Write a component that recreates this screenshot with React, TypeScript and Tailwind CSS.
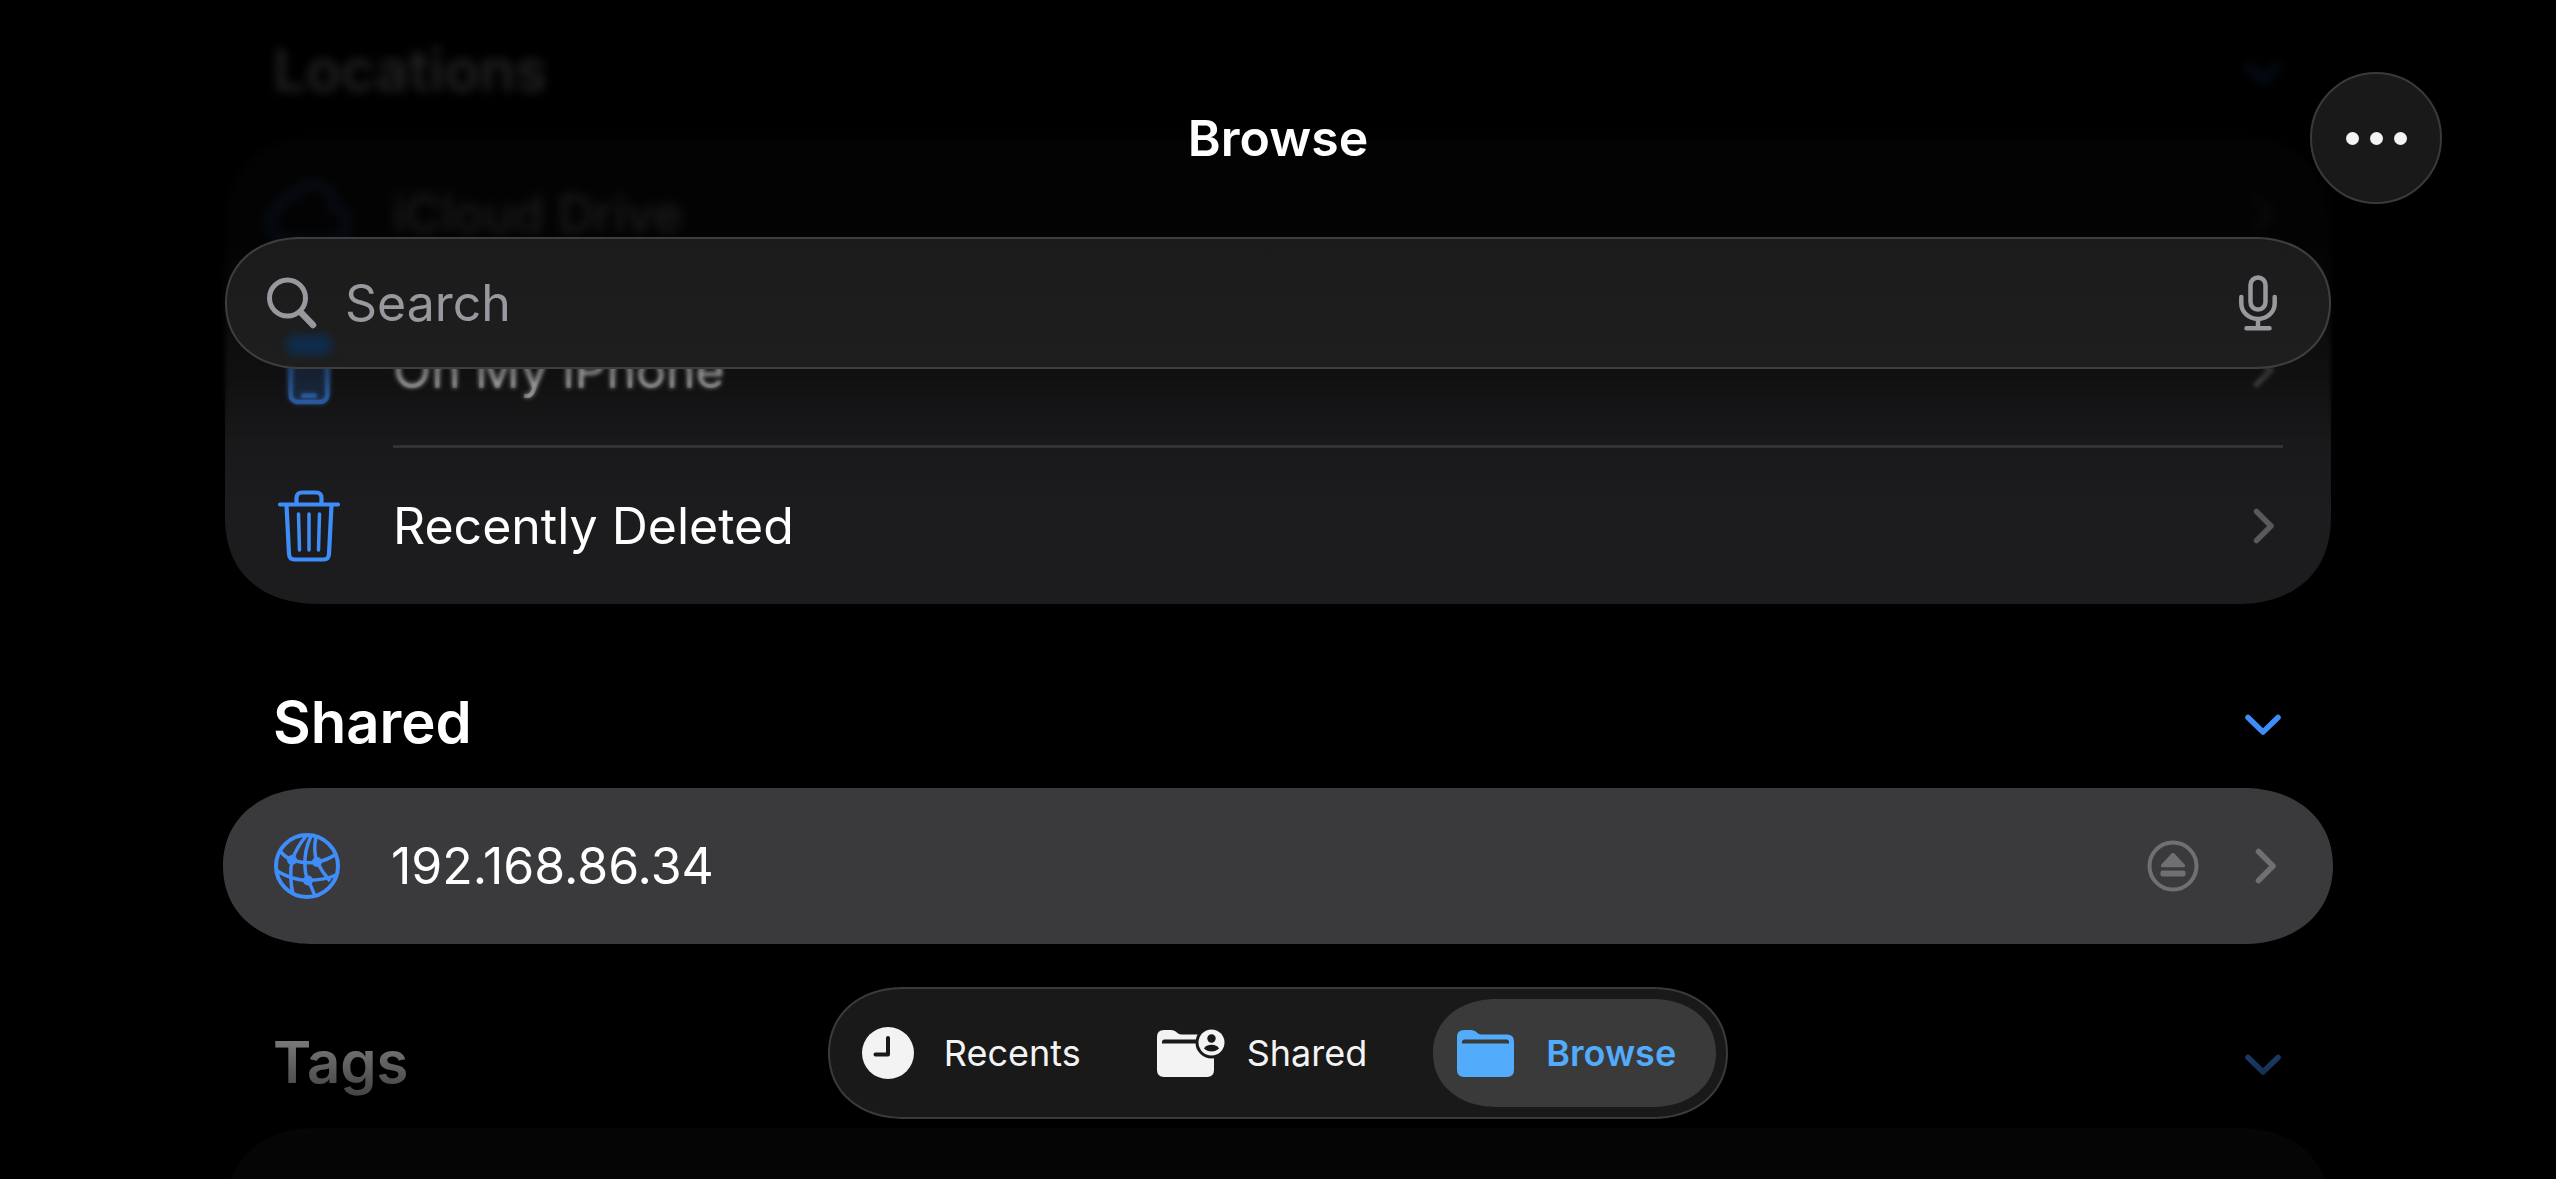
import { useState, type ReactNode } from "react";

type Tab = "Recents" | "Shared" | "Browse";

function TrashIcon() {
  return (
    <svg className="h-[72px] w-16" viewBox="0 0 64 72" fill="none" stroke="currentColor" strokeWidth="4.2" strokeLinecap="round" strokeLinejoin="round">
      <path d="M3 14.5H61M19.500 14V8q0-5.500 5.500-5.500H39Q44.500 2.500 44.500 8V14" />
      <path d="M9.500 15l2.500 49q.3 5.500 5.500 5.500H46.500q5.200 0 5.500-5.500L54.500 15" />
      <path d="M21.500 24l1 36M32 24v36M42.500 24l-1 36" strokeWidth="3.500" />
    </svg>
  );
}

function PhoneIcon() {
  return (
    <svg className="h-[72px] w-16" viewBox="0 0 64 72" fill="none" stroke="currentColor" strokeWidth="4.5" strokeLinecap="round">
      <rect x="13.500" y="2" width="37" height="66" rx="7" fill="currentColor" fillOpacity="0.25" />
      <path d="M26 61.500H38" />
    </svg>
  );
}

function CloudIcon() {
  return (
    <svg className="h-[72px] w-[84px]" viewBox="0 0 84 72" fill="none" stroke="currentColor" strokeWidth="5">
      <path d="M22 62C10 62 3 54 3 45c0-8 5-13 10-16 1-9 9-13 15-11C32 10 40 5 49 7c11 2 18 11 17 22 9 2 15 8 15 17 0 9-7 16-16 16Z" />
    </svg>
  );
}

function NetworkIcon() {
  return (
    <svg className="size-[66px]" viewBox="0 0 66 66" fill="none" stroke="currentColor" strokeWidth="3.5">
      <circle cx="33" cy="33" r="31" strokeWidth="4" />
      <path d="M32 3Q23 14 18 27Q15 43 19 62M37 3Q30 18 31 33Q31 41 34 47Q38 55 41 63M42 4Q39 17 43 29Q48 39 56 48" />
      <path d="M6 18Q12 25 18 27Q31 31 43 29Q54 27 62 21M3 38Q18 47 34 47.500Q51 47 62 42" />
      <circle cx="18" cy="27" r="5" fill="currentColor" stroke="none" />
      <circle cx="43" cy="29" r="5" fill="currentColor" stroke="none" />
      <circle cx="34" cy="47.500" r="5" fill="currentColor" stroke="none" />
    </svg>
  );
}

function ChevronRight() {
  return (
    <svg className="h-9 w-[22px]" viewBox="0 0 22 36" fill="none" stroke="currentColor" strokeWidth="5.5" strokeLinecap="round" strokeLinejoin="round">
      <path d="M3.500 3.500L18 18L3.500 32.500" />
    </svg>
  );
}

function ChevronDown() {
  return (
    <svg className="h-[22px] w-9" viewBox="0 0 36 22" fill="none" stroke="currentColor" strokeWidth="5.5" strokeLinecap="round" strokeLinejoin="round">
      <path d="M3 3.500L18 18L33 3.500" />
    </svg>
  );
}

function EjectIcon() {
  return (
    <svg className="size-[52px]" viewBox="0 0 52 52" fill="currentColor">
      <circle cx="26" cy="26" r="23.500" fill="none" stroke="currentColor" strokeWidth="4" />
      <path d="M24.300 13.800q1.700-1.600 3.400 0L37.600 24.500q1.500 2.500-1.300 2.700H15.700q-2.800-.2-1.300-2.700Z" />
      <rect x="13.500" y="30.500" width="25" height="6" rx="2" />
    </svg>
  );
}

function ClockIcon() {
  return (
    <svg className="size-[52px]" viewBox="0 0 52 52">
      <circle cx="26" cy="26" r="26" fill="currentColor" />
      <path d="M26 11V27.500H13.500" fill="none" stroke="#191919" strokeWidth="4" strokeLinecap="round" strokeLinejoin="round" />
    </svg>
  );
}

function FolderIcon({ slot, shared }: { slot: string; shared?: boolean }) {
  return (
    <svg className={shared ? "h-12 w-[68px]" : "h-12 w-[57px]"} viewBox={shared ? "0 0 68 48" : "0 0 57 48"}>
      <path d="M0 8Q0 1 7 1H14Q17 1 19 2.800L21 4.500Q22.500 5.500 25 5.500H50Q57 5.500 57 12.500V41Q57 48 50 48H7Q0 48 0 41Z" fill="currentColor" />
      <path d="M5 14.500V13Q5 10.500 7.500 10.500H49.500Q52 10.500 52 13V14.500Z" fill={slot} />
      {shared && (
        <>
          <circle cx="54.500" cy="13.500" r="16" fill={slot} />
          <circle cx="54.500" cy="13.500" r="13" fill="currentColor" />
          <circle cx="54.500" cy="9.500" r="4.200" fill={slot} />
          <path d="M47 19.500Q49 15.800 54.500 15.800T62 19.500Q59 22.500 54.500 22.500T47 19.500Z" fill={slot} />
        </>
      )}
    </svg>
  );
}

function SectionHeader({ title }: { title: string }) {
  return (
    <div className="flex h-46 items-center justify-between pt-[52px] pr-[50px] pl-12">
      <h2 className="text-[58px] leading-none font-semibold">{title}</h2>
      <button type="button" aria-label={`Collapse ${title}`} className="pt-1.5 text-[#3f8df8]">
        <ChevronDown />
      </button>
    </div>
  );
}

function Row({ icon, label, divider, children }: { icon: ReactNode; label: string; divider?: boolean; children?: ReactNode }) {
  return (
    <a href="#" className="flex h-39">
      <span className="flex w-42 shrink-0 items-center justify-center text-[#3f8df8]">{icon}</span>
      <span className={`mr-12 flex flex-1 items-center justify-between border-y-3 border-t-transparent pr-2 text-[50px] leading-none ${divider ? "border-b-[#38383a]" : "border-b-transparent"}`}>
        {label}
        <span className="flex items-center text-[#59595d]">{children ?? <ChevronRight />}</span>
      </span>
    </a>
  );
}

export default function App() {
  const [tab, setTab] = useState<Tab>("Browse");

  const tabs: { name: Tab; icon: ReactNode; spacing: string }[] = [
    { name: "Recents", icon: <ClockIcon />, spacing: "gap-[30px] px-[22px]" },
    { name: "Shared", icon: <FolderIcon slot="#191919" shared />, spacing: "gap-[22px] pl-[34px] pr-[46px]" },
    { name: "Browse", icon: <FolderIcon slot="#3a3a3a" />, spacing: "gap-8 pl-6 pr-10" },
  ];

  return (
    <div className="relative h-screen overflow-hidden bg-black font-[Inter,sans-serif] text-white">
      {/* Scrolled list */}
      <main className="-mt-12 px-[225px]">
        <SectionHeader title="Locations" />
        <div className="rounded-[96px/88px] bg-[#1c1c1e] [corner-shape:superellipse(1.2)]">
          <Row icon={<CloudIcon />} label="iCloud Drive" divider />
          <Row icon={<PhoneIcon />} label="On My iPhone" divider />
          <Row icon={<TrashIcon />} label="Recently Deleted" />
        </div>

        <SectionHeader title="Shared" />
        <div className="-mx-[2px] rounded-[90px/78px] bg-[#3a3a3c] [corner-shape:superellipse(1.1)]">
          <Row icon={<NetworkIcon />} label="192.168.86.34">
            <span className="flex items-center gap-14 text-[#707073]">
              <EjectIcon />
              <ChevronRight />
            </span>
          </Row>
        </div>

        <SectionHeader title="Tags" />
        <div className="h-60 rounded-[96px/88px] bg-[#1c1c1e] [corner-shape:superellipse(1.2)]" />
      </main>

      {/* Edge fades */}
      <div className="pointer-events-none absolute inset-x-0 top-0 h-80 mask-[linear-gradient(black_75%,transparent)] backdrop-blur-[5px]" />
      <div className="pointer-events-none absolute inset-x-0 top-0 h-110 mask-[linear-gradient(black_85%,transparent)] backdrop-blur-[2px]" />
      <div className="pointer-events-none absolute inset-x-0 top-0 h-[500px] bg-[linear-gradient(rgba(0,0,0,.86)_0px,rgba(0,0,0,.88)_240px,rgba(0,0,0,.42)_370px,rgba(0,0,0,.12)_430px,transparent_500px)]" />
      <div className="pointer-events-none absolute inset-x-0 bottom-0 h-[235px] bg-[linear-gradient(transparent,rgba(0,0,0,.53)_97px,rgba(0,0,0,.7)_141px,rgba(0,0,0,.8)_185px,rgba(0,0,0,.84))]" />

      {/* Navigation bar */}
      <header className="absolute inset-x-0 top-0 pt-18">
        <div className="grid h-33 grid-cols-[1fr_auto_1fr] items-center px-[114px]">
          <h1 className="col-start-2 text-[50px] leading-none font-semibold">Browse</h1>
          <button type="button" aria-label="More" className="flex size-33 items-center justify-center gap-[11px] justify-self-end rounded-full border-2 border-[#3a3a3a] bg-[#191919]">
            <span className="size-[13px] rounded-full bg-[#f3f3f3]" />
            <span className="size-[13px] rounded-full bg-[#f3f3f3]" />
            <span className="size-[13px] rounded-full bg-[#f3f3f3]" />
          </button>
        </div>
        <div className="relative mx-[225px] mt-[33px] flex h-33 items-center overflow-hidden rounded-[76px/66px] border-2 border-[#3e3e3e] bg-linear-to-b from-[#1b1b1b] to-[#1e1e1e] pr-[52px] pl-10 text-[#98989f] [corner-shape:superellipse(1.1)]">
          <span className="absolute top-24 left-15 h-5 w-11 rounded-md bg-[#0f2c4c] blur-[4px]" />
          <svg className="h-[52px] w-[50px] shrink-0" viewBox="0 0 50 52" fill="none" stroke="currentColor" strokeWidth="5" strokeLinecap="round">
            <circle cx="20.500" cy="21" r="18" />
            <path d="M33.500 35L46 48" strokeWidth="6.5" />
          </svg>
          <input type="search" aria-label="Search" placeholder="Search" className="ml-7 min-w-0 flex-1 bg-transparent text-[50px] outline-none placeholder:text-[#98989f]" />
          <button type="button" aria-label="Dictate">
            <svg className="h-14 w-[38px]" viewBox="0 0 38 56" fill="none" stroke="currentColor" strokeWidth="4.5" strokeLinecap="round">
              <rect x="11.500" y="2.500" width="15" height="32" rx="7.500" />
              <path d="M2.300 22v6.500a16.700 15.500 0 0 0 33.400 0V22M19 45v8M7.500 53.200H30.500" />
            </svg>
          </button>
        </div>
      </header>

      {/* Tab bar */}
      <nav className="absolute inset-x-0 bottom-15 flex justify-center">
        <div className="flex h-33 gap-5 rounded-[76px/66px] border-2 border-[#3a3a3a] bg-[#191919] p-[10px] [corner-shape:superellipse(1.1)]">
          {tabs.map((t) => (
            <button
              key={t.name}
              type="button"
              onClick={() => setTab(t.name)}
              className={`flex items-center rounded-[64px/54px] text-[36px] leading-none [corner-shape:superellipse(1.1)] ${t.spacing} ${
                tab === t.name ? "bg-[#3a3a3a] font-semibold text-[#52abfb]" : "text-[#f3f3f3]"
              }`}
            >
              {t.icon}
              {t.name}
            </button>
          ))}
        </div>
      </nav>
    </div>
  );
}
